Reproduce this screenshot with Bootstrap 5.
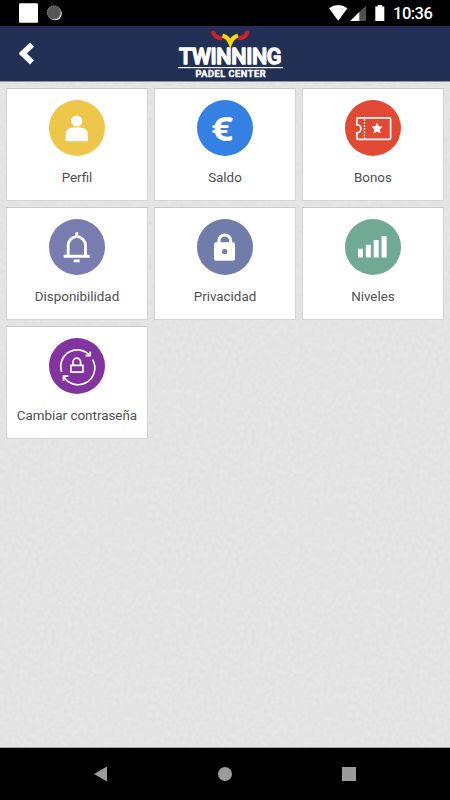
<!DOCTYPE html>
<html lang="es">
<head>
<meta charset="utf-8">
<meta name="viewport" content="width=device-width, initial-scale=1">
<title>Twinning Padel Center</title>
<link href="https://cdn.jsdelivr.net/npm/bootstrap@5.3.0/dist/css/bootstrap.min.css" rel="stylesheet">
<style>
body{font-family:Roboto,"Liberation Sans",sans-serif;height:800px;overflow:hidden}
svg{display:block;flex:none}
.status-bar{height:26px;padding:0 17px 0 19px}
.clock{font-size:16.5px;font-weight:500;line-height:26px;letter-spacing:-.5px;margin-left:8px;width:40px;white-space:nowrap;padding-top:2px}
.app-bar{height:56px;background:#233056;border-bottom:1px solid #8d929f;padding-left:19px}
.logo{margin-left:142px}
.paper{background-color:#e3e3e3;background-image:url("data:image/svg+xml,%3Csvg xmlns='http://www.w3.org/2000/svg' width='200' height='200'%3E%3Cfilter id='n' x='0' y='0' width='1' height='1' color-interpolation-filters='sRGB'%3E%3CfeTurbulence type='fractalNoise' baseFrequency='.25' numOctaves='2' stitchTiles='stitch'/%3E%3CfeColorMatrix values='.04 0 0 0 .873 .04 0 0 0 .873 .04 0 0 0 .873 0 0 0 0 1'/%3E%3C/filter%3E%3Crect width='200' height='200' filter='url(%23n)'/%3E%3C/svg%3E");padding:0 6px;border-bottom:1px solid #a5a5a5}
.tiles{--bs-gutter-x:6px;--bs-gutter-y:6px}
.tile{height:113px;padding-top:11px;border:1px solid #d4d4d4;border-top-color:#c9c9c9;color:#505050;font-size:13.4px;line-height:20px;text-decoration:none}
.tile span{margin-top:12px;white-space:nowrap}
.nav-keys{height:52px;padding:0 94px}
</style>
</head>
<body class="d-flex flex-column m-0">
<div class="status-bar bg-black text-white d-flex align-items-center">
<svg width="44" height="26"><rect y="3.3" width="19" height="19.4" rx="1.2" fill="#fff"/><circle cx="36.2" cy="13.6" r="6.6" fill="#fff"/><circle cx="35" cy="12.5" r="7" fill="#555"/><circle cx="35" cy="12.5" r="6.6" fill="none" stroke="#999" stroke-width="1" stroke-dasharray="1 1"/></svg>
<svg class="ms-auto" width="57" height="26"><path d="M1 8.3Q10 1.8 19.500 8.300L10.200 20.800Z" fill="#fff"/><path d="M38 5.500V21H22.200Z" fill="#505050"/><path d="M31.300 12V21H22.200Z" fill="#fff"/><path d="M47.300 6.500h2.300V5h4.500v1.500h2.200V21h-9z" fill="#fff"/></svg>
<div class="clock">10:36</div>
</div>
<header class="app-bar d-flex align-items-center">
<svg width="16" height="24" viewBox="0 0 16 24"><path d="M13 2.700L3.700 11.500l9.300 8.800" fill="none" stroke="#fff" stroke-width="5.800"/></svg>
<svg class="logo" width="108" height="56" viewBox="0 0 108 56" role="img" aria-label="Twinning Padel Center">
<path d="M35.500 5Q37.500 12.200 45 12.300" fill="none" stroke="#cf202b" stroke-width="4.200"/><path d="M71 5Q69 12.200 61.500 12.300" fill="none" stroke="#cf202b" stroke-width="4.200"/>
<path d="M45.500 9.800Q51 11 53.300 17Q55.600 11 61 9.800" fill="none" stroke="#ffdc00" stroke-width="4.200"/>
<text x="2" y="38" textLength="102.500" font-family="Roboto" font-weight="500" font-size="21.500" fill="#fff" stroke="#fff" stroke-width="1.400" stroke-linejoin="round">TWINNING</text>
<rect x="1" y="41" width="105" height="1.200" fill="#fff"/>
<text x="18.500" y="51" textLength="70" font-family="Roboto" font-weight="500" font-size="9.200" fill="#fff" stroke="#fff" stroke-width=".6" stroke-linejoin="round">PADEL CENTER</text>
</svg>
</header>
<main class="paper flex-grow-1">
<div class="row row-cols-3 tiles mt-0">
<div class="col"><a class="tile bg-white d-flex flex-column align-items-center"><svg width="56" height="56"><circle cx="28" cy="28" r="28" fill="#eec64a"/><g fill="#fff"><circle cx="27.700" cy="21" r="5.600"/><path d="M16.600 41.200V35q0-7.400 8-7.400h6.200q8 0 8 7.400v6.200z"/></g></svg><span>Perfil</span></a></div>
<div class="col"><a class="tile bg-white d-flex flex-column align-items-center"><svg width="56" height="56"><circle cx="28" cy="28" r="28" fill="#3481e3"/><text x="14.200" y="40.500" textLength="22" lengthAdjust="spacingAndGlyphs" font-family="Noto Sans" font-weight="700" font-size="34" fill="#fff">€</text></svg><span>Saldo</span></a></div>
<div class="col"><a class="tile bg-white d-flex flex-column align-items-center"><svg width="56" height="56"><circle cx="28" cy="28" r="28" fill="#e24932"/><path d="M13 17.800H44.300q1.300 0 1.300 1.300V38q0 1.300-1.300 1.300H13q-1.200 0-1.200-1.300v-5.200a4.100 4.100 0 0 0 0-8.200v-5.500q0-1.300 1.200-1.300z" fill="none" stroke="#fff" stroke-width="1.700"/><path d="M19.500 19v20" stroke="#fff" stroke-width="1.300" stroke-dasharray="1.800 1.300"/><path d="M32 23.300l1.500 3.300 3.500.4-2.600 2.400.7 3.500-3.100-1.800-3.100 1.800.7-3.500-2.600-2.400 3.500-.4z" fill="#fff" stroke="#fff" stroke-width=".7" stroke-linejoin="round"/></svg><span>Bonos</span></a></div>
<div class="col"><a class="tile bg-white d-flex flex-column align-items-center"><svg width="56" height="56"><circle cx="28" cy="28" r="28" fill="#787caf"/><path d="M19.200 36V26.500a8.600 8.900 0 0 1 17.200 0V36" fill="none" stroke="#fff" stroke-width="2.900"/><path d="M14.700 35.800h26v2.900h-26zM24.700 40.500h6v2.800h-6zM26.300 17v-2.500a1.500 1.500 0 0 1 3 0V17z" fill="#fff"/></svg><span>Disponibilidad</span></a></div>
<div class="col"><a class="tile bg-white d-flex flex-column align-items-center"><svg width="56" height="56"><circle cx="28" cy="28" r="28" fill="#707dab"/><rect x="17" y="23.300" width="21" height="18.500" rx="2.200" fill="#fff"/><path d="M21.900 24v-2.200a5.900 5.900 0 0 1 11.800 0V24" fill="none" stroke="#fff" stroke-width="3"/><circle cx="27.700" cy="32.600" r="2.700" fill="#707dab"/></svg><span>Privacidad</span></a></div>
<div class="col"><a class="tile bg-white d-flex flex-column align-items-center"><svg width="56" height="56"><circle cx="28" cy="28" r="28" fill="#70a994"/><path d="M13 29.700h5v8.900h-5zM20.800 25.700h5v12.900h-5zM28.700 21h5v17.600h-5zM36.500 17h5.100v21.600h-5.100z" fill="#fff"/></svg><span>Niveles</span></a></div>
<div class="col"><a class="tile bg-white d-flex flex-column align-items-center"><svg width="56" height="56"><circle cx="28" cy="28" r="28" fill="#8333a0"/><g fill="none" stroke="#fff" stroke-width="1.700"><path d="M12.700 34A16.600 16.600 0 0 1 41 17.700M41.200 13.500v4.200h-4.700M43.600 21.700A16.600 16.600 0 0 1 14.600 38.300M14.500 43v-4.800h5"/><path d="M21.900 27.300h12v6.800h-12zM24 27v-3a3.800 3.800 0 0 1 7.600 0v3" stroke-width="1.700"/></g></svg><span>Cambiar contraseña</span></a></div>
</div>
</main>
<footer class="nav-keys bg-black d-flex justify-content-between align-items-center">
<svg width="13" height="16"><path d="M0 8L13 .5v15z" fill="#9b9b9b"/></svg>
<svg width="14" height="14"><circle cx="7" cy="7" r="7" fill="#9b9b9b"/></svg>
<svg width="14" height="14"><rect width="14" height="14" fill="#9b9b9b"/></svg>
</footer>
<script src="https://cdn.jsdelivr.net/npm/bootstrap@5.3.0/dist/js/bootstrap.bundle.min.js"></script>
</body>
</html>
